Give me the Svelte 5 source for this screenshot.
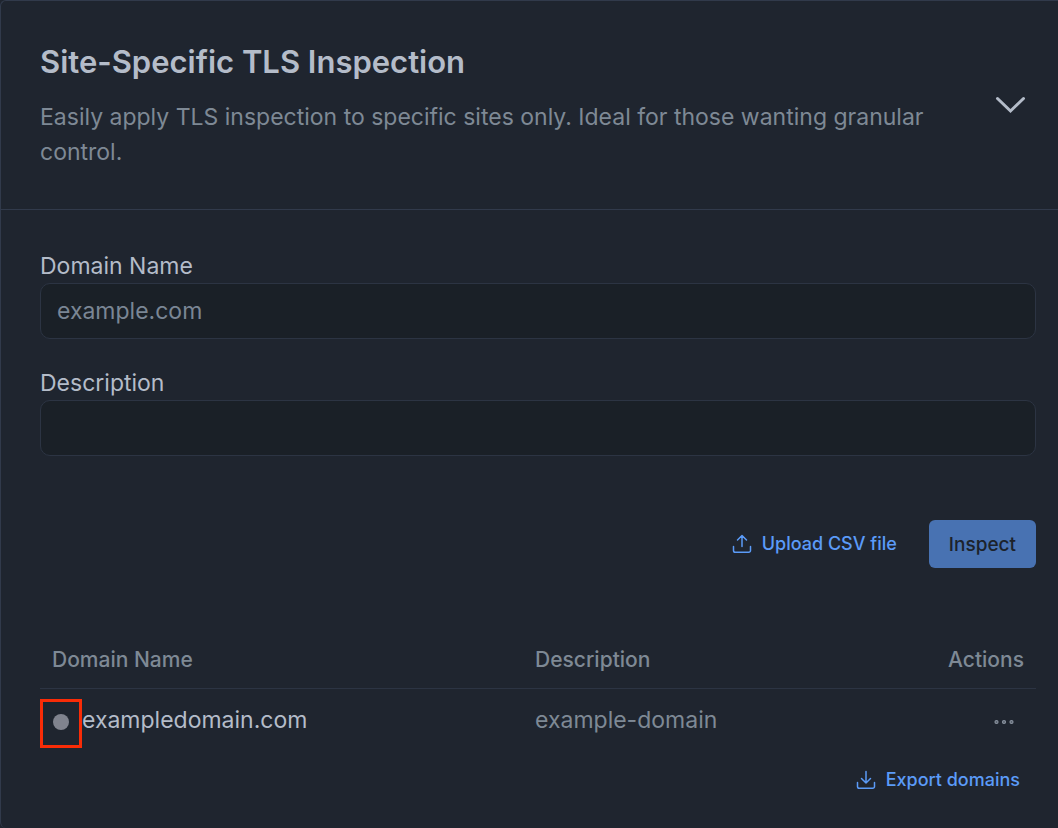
<script>
  let open = $state(true)
  let domainName = $state('')
  let description = $state('')

  let domains = $state([
    { name: 'exampledomain.com', description: 'example-domain' },
  ])

  function inspect() {
    if (!domainName) return
    domains.push({ name: domainName, description })
    domainName = ''
    description = ''
  }
</script>

<section class="panel">
  <header class="panel-header">
    <div class="intro">
      <h2>Site-Specific TLS Inspection</h2>
      <p>Easily apply TLS inspection to specific sites only. Ideal for those wanting granular control.</p>
    </div>
    <button class="toggle" type="button" aria-label="Toggle section" aria-expanded={open} onclick={() => (open = !open)}>
      <svg width="32" height="20" viewBox="0 0 32 20" fill="none" stroke="currentColor" stroke-width="3" stroke-linecap="round" stroke-linejoin="miter">
        <path d="M3.500 3.500 16.500 16 29.500 3.500" />
      </svg>
    </button>
  </header>

  {#if open}
    <div class="panel-body">
      <form onsubmit={e => { e.preventDefault(); inspect() }}>
        <div class="field">
          <label for="domain-name">Domain Name</label>
          <input id="domain-name" type="text" placeholder="example.com" bind:value={domainName} />
        </div>
        <div class="field">
          <label for="description">Description</label>
          <input id="description" type="text" bind:value={description} />
        </div>

        <div class="form-actions">
          <button class="link-button" type="button">
            <svg width="20" height="20" viewBox="0 0 20 20" fill="none" stroke="currentColor" stroke-width="1.5" stroke-linecap="round" stroke-linejoin="round">
              <path d="M10 12.500V1.500M5.500 6 10 1.500 14.500 6M1.500 12.500v4a1.800 1.800 0 0 0 1.800 1.800h13.400a1.800 1.800 0 0 0 1.800-1.800v-4" />
            </svg>
            Upload CSV file
          </button>
          <button class="primary" type="submit">Inspect</button>
        </div>
      </form>

      <table>
        <thead>
          <tr>
            <th class="col-name">Domain Name</th>
            <th>Description</th>
            <th class="col-actions">Actions</th>
          </tr>
        </thead>
        <tbody>
          {#each domains as domain}
            <tr>
              <td class="col-name">
                <div class="domain">
                  <span class="status"><span class="dot"></span></span>
                  {domain.name}
                </div>
              </td>
              <td class="muted">{domain.description}</td>
              <td class="col-actions">
                <button class="more" type="button" aria-label="Actions for {domain.name}">
                  <svg width="20" height="6" viewBox="0 0 20 6" fill="#59626d" stroke="currentColor" stroke-width="1.2">
                    <circle cx="2.500" cy="3" r="1.500" />
                    <circle cx="10" cy="3" r="1.500" />
                    <circle cx="17.500" cy="3" r="1.500" />
                  </svg>
                </button>
              </td>
            </tr>
          {/each}
        </tbody>
      </table>

      <div class="export">
        <button class="link-button" type="button">
          <svg width="20" height="20" viewBox="0 0 20 20" fill="none" stroke="currentColor" stroke-width="1.5" stroke-linecap="round" stroke-linejoin="round">
            <path d="M10 1.500V13M5.500 8.500 10 13l4.500-4.500M1.500 12.500v4a1.800 1.800 0 0 0 1.800 1.800h13.400a1.800 1.800 0 0 0 1.800-1.800v-4" />
          </svg>
          Export domains
        </button>
      </div>
    </div>
  {/if}
</section>

<style>
  :global(body) {
    margin: 0;
    background: #1f252f;
    font-family: Inter, 'Liberation Sans', sans-serif;
  }

  .panel {
    border: 1px solid #313a4b;
    border-width: 1px 0 0 1px;
    border-radius: 6px 0 0 6px;
    color: #b4bcc9;
  }

  .panel-header {
    display: flex;
    align-items: center;
    justify-content: space-between;
    gap: 32px;
    padding: 39px 32px;
    border-bottom: 1px solid #313a4b;
  }

  .intro { flex: 1; max-width: 920px; }

  h2 {
    margin: 0 0 16px;
    font-size: 31px;
    line-height: 44px;
    font-weight: 600;
  }

  p {
    margin: 0;
    font-size: 23px;
    line-height: 35px;
    color: #7e8995;
  }

  button {
    padding: 0;
    border: none;
    background: none;
    font-family: inherit;
    cursor: pointer;
  }
  button svg { display: block; }

  .toggle { color: #b4bcc9; }

  .panel-header { padding-left: 39px; }
  .panel-body { padding: 40px 22px 36px 39px; }

  .field { margin-bottom: 28px; }

  label {
    display: block;
    font-size: 23px;
    line-height: 33px;
  }

  input {
    display: block;
    box-sizing: border-box;
    width: 100%;
    height: 56px;
    padding: 0 16px;
    border: 1px solid #2c3443;
    border-radius: 10px;
    background: #1a2027;
    color: inherit;
    font-family: inherit;
    font-size: 23px;
  }
  input::placeholder { color: #7a8695; opacity: 1; }

  .form-actions {
    display: flex;
    justify-content: flex-end;
    align-items: center;
    gap: 32px;
    padding-top: 36px;
  }

  .link-button {
    display: flex;
    align-items: center;
    gap: 10px;
    color: #5b9bf8;
    font-size: 18px;
    line-height: 24px;
    font-weight: 500;
  }

  .primary {
    height: 48px;
    padding: 0 20px;
    border-radius: 6px;
    background: #4872b2;
    color: #1c222b;
    font-size: 19px;
    font-weight: 500;
  }

  table {
    width: 100%;
    margin-top: 64px;
    border-collapse: collapse;
    text-align: left;
  }

  th {
    padding: 14px 12px;
    border-bottom: 1px solid #2c3443;
    color: #7e8995;
    font-size: 21px;
    line-height: 28px;
    font-weight: 500;
  }

  td {
    padding: 10px 12px 0;
    font-size: 23px;
    line-height: 42px;
    vertical-align: top;
  }

  .col-name { width: 48.5%; }
  .col-actions { text-align: right; }
  td.col-name { padding-left: 0; }
  .muted { color: #7e8995; }

  .domain { display: flex; align-items: flex-start; }

  .status {
    display: flex;
    justify-content: center;
    box-sizing: border-box;
    width: 42px;
    height: 49px;
    padding-top: 12px;
    border: 3px solid #f92c07;
  }
  .dot {
    width: 16px;
    height: 16px;
    border-radius: 50%;
    background: #80838e;
  }

  .more {
    padding: 8px 10px;
    color: #8a93a0;
    vertical-align: middle;
  }

  .export {
    display: flex;
    justify-content: flex-end;
    padding: 20px 16px 0;
  }
</style>
